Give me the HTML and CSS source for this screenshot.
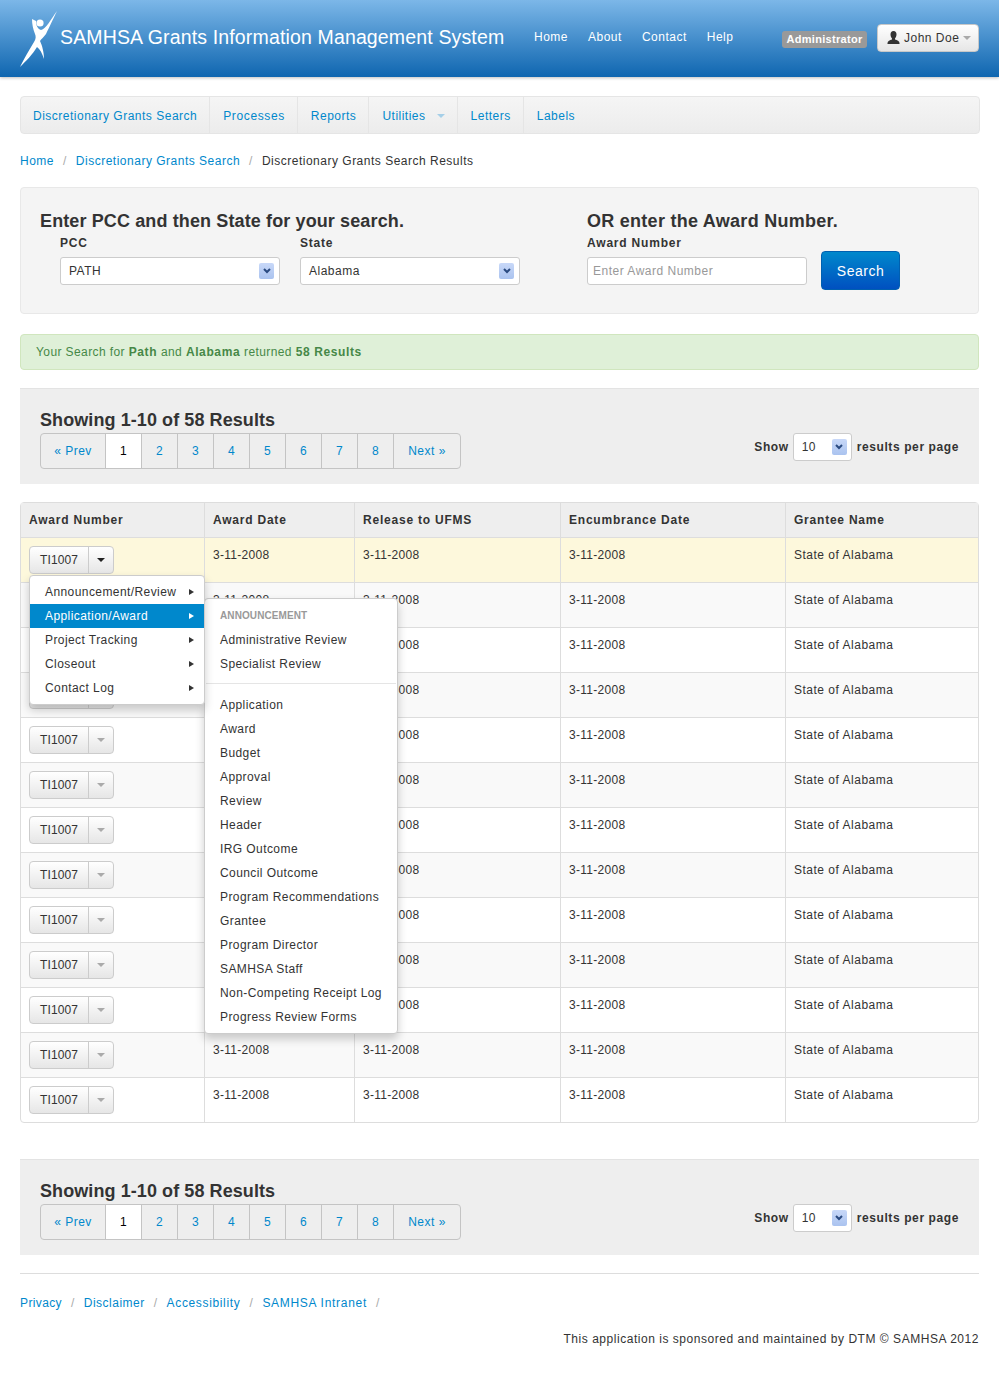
FILE: index.html
```html
<!DOCTYPE html>
<html>
<head lang="en">
    <meta charset="UTF-8">
    <title>SAMHSA Grants Information Management System</title>
    <link rel="stylesheet" href="styles.css">
</head>
<body>
<div id="header">
    <svg class="logo" width="40" height="58" viewBox="20 9 40 58">
        <path fill="#fff" d="M32 18 L36 20 C36 25 38 28 41 29 C46 28 51 18 57 10 C53 18 49 27 46 33 C44 36 41 38 40 40 C42 44 44 51 44 58 C42 52 40 48 37 46 C33 53 26 60 20 66 C24 58 29 49 34 41 C36 38 36 35 35 33 C33 28 32 23 32 18 Z"/>
        <circle fill="#fff" cx="40" cy="22" r="3.6"/>
    </svg>
    <div class="brand">SAMHSA Grants Information Management System</div>
    <ul class="topnav">
        <li>Home</li>
        <li>About</li>
        <li>Contact</li>
        <li>Help</li>
    </ul>
    <span class="role">Administrator</span>
    <div class="userbtn">
        <svg width="13" height="13" viewBox="0 0 13 13"><path fill="#333" d="M6.5 0 C8.5 0 9.5 1.5 9.5 3.5 C9.5 5.5 8.6 6.8 8 7.5 L8 8.5 C10 9.2 12.5 10 12.5 12 L12.5 13 L0.5 13 L0.5 12 C0.5 10 3 9.2 5 8.5 L5 7.5 C4.4 6.8 3.5 5.5 3.5 3.5 C3.5 1.5 4.5 0 6.5 0 Z"/></svg>
        <span>John Doe</span>
        <i class="caret grey"></i>
    </div>
</div>

<div id="container">
    <ul class="subnav">
        <li><a>Discretionary Grants Search</a></li>
        <li><a>Processes</a></li>
        <li><a>Reports</a></li>
        <li class="util"><a>Utilities</a><i class="caret blue"></i></li>
        <li><a>Letters</a></li>
        <li class="last"><a>Labels</a></li>
    </ul>

    <ul class="crumbs">
        <li><a>Home</a><span>/</span></li>
        <li><a>Discretionary Grants Search</a><span>/</span></li>
        <li>Discretionary Grants Search Results</li>
    </ul>

    <div class="searchbox">
        <div class="search-left">
            <h3>Enter PCC and then State for your search.</h3>
            <div class="fields">
                <div class="field">
                    <label>PCC</label>
                    <div class="select wide"><span class="val-path">PATH</span><b class="arrow"><svg width="10" height="8" viewBox="0 0 10 8"><path fill="none" stroke="#2a4a80" stroke-width="2" d="M2 2 L5 5 L8 2"/></svg></b></div>
                </div>
                <div class="field">
                    <label>State</label>
                    <div class="select wide"><span class="val-path">Alabama</span><b class="arrow"><svg width="10" height="8" viewBox="0 0 10 8"><path fill="none" stroke="#2a4a80" stroke-width="2" d="M2 2 L5 5 L8 2"/></svg></b></div>
                </div>
            </div>
        </div>
        <div class="search-right">
            <h3>OR enter the Award Number.</h3>
            <label>Award Number</label>
            <div class="award-row">
                <div class="textinput">Enter Award Number</div>
                <div class="searchbtn">Search</div>
            </div>
        </div>
    </div>

    <div class="alert">Your Search for <b>Path</b> and <b>Alabama</b> returned <b>58 Results</b></div>

    <div class="resultbar">
        <div>
            <h3>Showing 1-10 of 58 Results</h3>
            <ul class="pager">
                <li class="wide-l">« Prev</li><li class="on">1</li><li>2</li><li>3</li><li>4</li><li>5</li><li>6</li><li>7</li><li>8</li><li class="wide-r">Next »</li>
            </ul>
        </div>
        <div class="perpage">
            <b>Show</b>
            <div class="select small"><span>10</span><b class="arrow"><svg width="10" height="8" viewBox="0 0 10 8"><path fill="none" stroke="#2a4a80" stroke-width="2" d="M2 2 L5 5 L8 2"/></svg></b></div>
            <b>results per page</b>
        </div>
    </div>

    <div class="tablewrap">
        <table id="results">
            <thead>
                <tr><th class="c1">Award Number</th><th class="c2">Award Date</th><th class="c3">Release to UFMS</th><th class="c4">Encumbrance Date</th><th class="c5">Grantee Name</th></tr>
            </thead>
            <tbody id="rows"></tbody>
        </table>

        <ul class="menu">
            <li>Announcement/Review<i></i></li>
            <li class="active">Application/Award<i></i></li>
            <li>Project Tracking<i></i></li>
            <li>Closeout<i></i></li>
            <li>Contact Log<i></i></li>
        </ul>
        <ul class="submenu">
            <li class="head">ANNOUNCEMENT</li>
            <li>Administrative Review</li>
            <li>Specialist Review</li>
            <li class="divider"></li>
            <li>Application</li>
            <li>Award</li>
            <li>Budget</li>
            <li>Approval</li>
            <li>Review</li>
            <li>Header</li>
            <li>IRG Outcome</li>
            <li>Council Outcome</li>
            <li>Program Recommendations</li>
            <li>Grantee</li>
            <li>Program Director</li>
            <li>SAMHSA Staff</li>
            <li>Non-Competing Receipt Log</li>
            <li>Progress Review Forms</li>
        </ul>
    </div>

    <div class="resultbar second">
        <div>
            <h3>Showing 1-10 of 58 Results</h3>
            <ul class="pager">
                <li class="wide-l">« Prev</li><li class="on">1</li><li>2</li><li>3</li><li>4</li><li>5</li><li>6</li><li>7</li><li>8</li><li class="wide-r">Next »</li>
            </ul>
        </div>
        <div class="perpage">
            <b>Show</b>
            <div class="select small"><span>10</span><b class="arrow"><svg width="10" height="8" viewBox="0 0 10 8"><path fill="none" stroke="#2a4a80" stroke-width="2" d="M2 2 L5 5 L8 2"/></svg></b></div>
            <b>results per page</b>
        </div>
    </div>

    <div class="footer">
        <ul class="footlinks">
            <li><a>Privacy</a><span>/</span></li>
            <li><a>Disclaimer</a><span>/</span></li>
            <li><a>Accessibility</a><span>/</span></li>
            <li><a>SAMHSA Intranet</a><span>/</span></li>
        </ul>
        <p>This application is sponsored and maintained by DTM © SAMHSA 2012</p>
    </div>
</div>
<script>
    var oRows = document.getElementById('rows');
    var html = '';
    for(var i=0;i<13;i++){
        var cls = i==0 ? 'hl' : (i%2==1 ? 'odd' : '');
        html += '<tr class="'+cls+'"><td><div class="splitbtn"><span class="code">TI1007</span><span class="tog"><i class="caret '+(i==0?'dark':'grey')+'"></i></span></div></td>'
            +'<td class="date">3-11-2008</td><td class="date">3-11-2008</td><td class="date">3-11-2008</td><td class="name">State of Alabama</td></tr>';
    }
    oRows.innerHTML = html;
</script>
</body>
</html>
```

FILE: styles.css
```css
*{
    margin: 0;
    padding: 0;
    box-sizing: border-box;
}
ul{
    list-style: none;
}
body{
    font-family: "Liberation Sans", Arial, sans-serif;
    font-size: 12px;
    letter-spacing: 0.5px;
    line-height: 18px;
    color: #333;
    background: #fff;
}
a{
    color: #0088cc;
}
.caret{
    display: inline-block;
    width: 0;
    height: 0;
    border-left: 4px solid transparent;
    border-right: 4px solid transparent;
    border-top: 4px solid #000;
}
.caret.grey{
    border-top-color: #aaa;
}
.caret.blue{
    border-top-color: #a5cfe8;
}
.caret.dark{
    border-top-color: #222;
}

#header{
    height: 77px;
    display: flex;
    align-items: center;
    padding: 0 20px;
    background: linear-gradient(#7cb7e8, #0f66b0);
    box-shadow: 0 1px 3px rgba(0,0,0,.25);
    color: #fff;
}
.logo{
    flex: none;
}
.brand{
    font-size: 19.5px;
    letter-spacing: 0.15px;
    margin-top: -3px;
    white-space: nowrap;
    width: 474px;
}
.topnav{
    display: flex;
    gap: 20px;
    margin-top: -3px;
    width: 248px;
}
.role{
    background: #999;
    color: #fff;
    font-size: 11px;
    font-weight: bold;
    line-height: 17px;
    height: 17px;
    width: 85px;
    text-align: center;
    border-radius: 3px;
    white-space: nowrap;
    letter-spacing: 0.3px;
    margin-top: 2px;
}
.userbtn{
    margin-left: 10px;
    height: 28px;
    width: 102px;
    flex: none;
    display: flex;
    align-items: center;
    gap: 4px;
    padding: 0 9px;
    color: #333;
    border: 1px solid #c8c8c8;
    border-radius: 4px;
    background: linear-gradient(#fff, #e6e6e6);
    white-space: nowrap;
    margin-top: -2px;
}
.userbtn svg{
    flex: none;
}

#container{
    padding: 19px 20px 0;
}
.subnav{
    display: flex;
    height: 38px;
    border: 1px solid #e5e5e5;
    border-radius: 4px;
    background: linear-gradient(#f5f5f5, #ececec);
    margin-right: -1px;
}
.subnav li{
    display: flex;
    align-items: center;
    padding: 1px 12px 0 13px;
    border-right: 1px solid #e5e5e5;
    white-space: nowrap;
}
.subnav li:first-child{
    padding-left: 12px;
}
.subnav li:nth-child(2){
    letter-spacing: 0.62px;
}
.subnav li.util{
    gap: 11px;
    padding-right: 12px;
}
.subnav li.last{
    border-right: 0;
}
.crumbs{
    display: flex;
    margin-top: 18px;
}
.crumbs span{
    color: #aaa;
    padding: 0 9px;
}

.searchbox{
    display: flex;
    height: 127px;
    margin-top: 17px;
    padding: 22px 19px 0;
    background: #f4f4f4;
    border: 1px solid #e8e8e8;
    border-radius: 4px;
}
h3{
    font-size: 18px;
    line-height: 22px;
    color: #333;
    letter-spacing: 0.12px;
}
.search-right h3{
    letter-spacing: 0.27px;
}
label{
    display: block;
    font-weight: bold;
    line-height: 18px;
    letter-spacing: 0.8px;
}
.search-left{
    width: 547px;
}
.fields{
    display: flex;
    gap: 20px;
    padding-left: 20px;
    margin-top: 2px;
}
.select{
    background: #fff;
    border: 1px solid #ccc;
    border-radius: 3px;
    display: flex;
    align-items: center;
    justify-content: space-between;
    height: 28px;
}
.select.wide{
    width: 220px;
    margin-top: 5px;
    padding: 0 5px 0 8px;
}
.select.small{
    width: 59px;
    padding: 0 4px 0 8px;
    margin: 0 5px 0 4px;
}
.arrow{
    width: 15px;
    height: 16px;
    display: flex;
    align-items: center;
    justify-content: center;
    background: linear-gradient(#c8d8f8, #aac3ef);
    border-radius: 2px;
}
.search-right label{
    margin-top: 2px;
}
.award-row{
    display: flex;
    align-items: flex-start;
    gap: 14px;
}
.textinput{
    width: 220px;
    height: 28px;
    margin-top: 5px;
    padding: 0 5px;
    line-height: 26px;
    background: #fff;
    border: 1px solid #ccc;
    border-radius: 3px;
    color: #999;
}
.searchbtn{
    width: 79px;
    height: 39px;
    line-height: 39px;
    text-align: center;
    font-size: 14px;
    color: #fff;
    background: linear-gradient(#0088cc, #0050c0);
    border-radius: 4px;
    border: 1px solid #0060b0;
    margin-top: -1px;
}

.alert{
    height: 36px;
    line-height: 35px;
    margin-top: 20px;
    padding-left: 15px;
    background: #dff0d8;
    border: 1px solid #d0e6be;
    border-radius: 4px;
    color: #468847;
    letter-spacing: 0.4px;
}
.alert b{
    letter-spacing: 0.62px;
}

.resultbar{
    display: flex;
    justify-content: space-between;
    align-items: center;
    height: 96px;
    margin-top: 18px;
    padding: 0 20px;
    background: #eee;
    border-top: 1px solid #e3e3e3;
}
.resultbar.second{
    margin-top: 36px;
}
.resultbar h3{
    margin-top: 4px;
    letter-spacing: 0.08px;
}
.pager{
    display: flex;
    height: 36px;
    border: 1px solid #c4c4c4;
    border-radius: 4px;
    color: #0088cc;
    margin-top: 2px;
}
.pager li{
    width: 36px;
    line-height: 34px;
    text-align: center;
    border-right: 1px solid #c4c4c4;
}
.pager li.wide-l{
    width: 65px;
}
.pager li.wide-r{
    width: 66px;
    border-right: 0;
}
.pager li.on{
    background: #fff;
    color: #000;
}
.perpage{
    display: flex;
    align-items: center;
    align-self: flex-end;
    margin-bottom: 23px;
}
.perpage b{
    letter-spacing: 0.6px;
}

.tablewrap{
    position: relative;
    margin-top: 18px;
}
#results{
    width: 959px;
    table-layout: fixed;
    border-collapse: separate;
    border-spacing: 0;
    border: 1px solid #ddd;
    border-radius: 4px;
}
#results th, #results td{
    border-left: 1px solid #ddd;
    text-align: left;
    vertical-align: top;
}
#results th:first-child, #results td:first-child{
    border-left: 0;
}
#results th{
    height: 34px;
    padding: 8px 8px 0;
    background: #eee;
    font-weight: bold;
    letter-spacing: 0.78px;
}
#results td{
    height: 45px;
    padding: 8px 8px 0;
    border-top: 1px solid #ddd;
    color: #333;
}
#results td.date{
    letter-spacing: 0.28px;
}
#results .c1{
    width: 183px;
}
#results .c2{
    width: 150px;
}
#results .c3{
    width: 206px;
}
#results .c4{
    width: 225px;
}
tr.hl td{
    background: #fdf8dc;
}
tr.odd td{
    background: #f9f9f9;
}
.splitbtn{
    display: inline-flex;
    height: 28px;
    border: 1px solid #ccc;
    border-radius: 4px;
    background: linear-gradient(#fff, #e6e6e6);
    line-height: 26px;
}
.code{
    width: 59px;
    text-align: center;
    border-right: 1px solid #ccc;
    letter-spacing: 0.1px;
}
.tog{
    width: 24px;
    display: flex;
    align-items: center;
    justify-content: center;
}

.menu, .submenu{
    position: absolute;
    background: #fff;
    border: 1px solid #ccc;
    border-radius: 4px;
    box-shadow: 0 5px 10px rgba(0,0,0,.2);
    white-space: nowrap;
}
.menu{
    left: 9px;
    top: 73px;
    width: 176px;
    padding: 4px 0;
    z-index: 2;
    letter-spacing: 0.42px;
}
.menu li{
    height: 24px;
    line-height: 24px;
    padding-left: 15px;
    position: relative;
}
.menu li i{
    position: absolute;
    right: 10px;
    top: 9px;
    width: 0;
    height: 0;
    border-top: 3px solid transparent;
    border-bottom: 3px solid transparent;
    border-left: 5px solid #333;
}
.menu li.active{
    background: #0088cc;
    color: #fff;
}
.menu li.active i{
    border-left-color: #fff;
}
.submenu{
    left: 184px;
    top: 96px;
    width: 194px;
    padding: 5px 0 4px;
    z-index: 1;
    letter-spacing: 0.42px;
}
.submenu li{
    height: 24px;
    line-height: 24px;
    padding-left: 15px;
}
.submenu li.head{
    font-size: 10px;
    font-weight: bold;
    color: #999;
    letter-spacing: 0.1px;
}
.submenu li.divider{
    height: 1px;
    margin: 7px 1px 9px;
    padding: 0;
    background: #e5e5e5;
}

.footer{
    margin-top: 18px;
    border-top: 1px solid #ddd;
    padding-top: 20px;
}
.footlinks{
    display: flex;
}
.footlinks span{
    color: #aaa;
    padding: 0 9px;
}
.footlinks li:first-child{
    letter-spacing: 0.38px;
}
.footlinks li:nth-child(3){
    letter-spacing: 0.65px;
}
.footlinks li:nth-child(4){
    letter-spacing: 0.7px;
}
.footer p{
    margin-top: 18px;
    text-align: right;
    padding-bottom: 48px;
    letter-spacing: 0.53px;
}
```
